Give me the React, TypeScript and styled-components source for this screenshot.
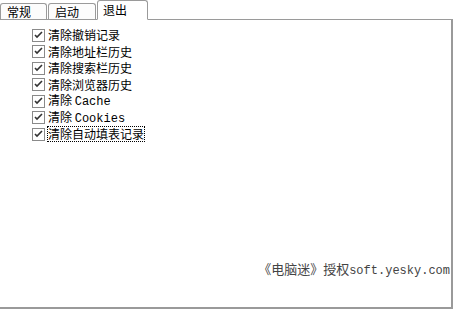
import styled, { createGlobalStyle } from "styled-components";

const GlobalStyle = createGlobalStyle`
  html, body {
    margin: 0;
    padding: 0;
    background: #ffffff;
  }
  body {
    font-family: "Noto Sans CJK SC", "DejaVu Sans", sans-serif;
    font-size: 12px;
    color: #000000;
  }
`;

const Window = styled.div`
  width: 474px;
  height: 310px;
  display: flex;
  flex-direction: column;
  background: #ffffff;
`;

const TabStrip = styled.div`
  display: flex;
  align-items: flex-end;
  height: 19px;
  position: relative;
  z-index: 1;
`;

const Tab = styled.div<{ $active?: boolean; $width: number }>`
  box-sizing: border-box;
  width: ${(p) => p.$width}px;
  height: ${(p) => (p.$active ? 20 : 16)}px;
  margin-bottom: ${(p) => (p.$active ? -1 : 0)}px;
  margin-right: 1px;
  border: 1px solid #9a9a9a;
  border-bottom: ${(p) => (p.$active ? "1px solid #ffffff" : "none")};
  border-radius: 3px 3px 0 0;
  background: ${(p) => (p.$active ? "#ffffff" : "#fcfcfc")};
  display: flex;
  align-items: center;
  padding-left: ${(p) => (p.$active ? 5 : 6)}px;
  padding-top: ${(p) => (p.$active ? 0 : 1)}px;
  font-size: 12px;
  line-height: 14px;
  white-space: nowrap;
`;

const Panel = styled.div`
  box-sizing: border-box;
  width: 453px;
  height: 290px;
  border-top: 1px solid #9a9a9a;
  border-right: 2px solid #9a9a9a;
  border-bottom: 2px solid #9a9a9a;
  display: flex;
  flex-direction: column;
  padding: 7px 0 27px 32px;
`;

const List = styled.div`
  display: flex;
  flex-direction: column;
  gap: 0.5px;
`;

const Row = styled.label`
  display: flex;
  align-items: center;
  height: 16px;
  gap: 2px;
`;

const Box = styled.span`
  box-sizing: border-box;
  width: 13px;
  height: 13px;
  border: 1px solid #8a8a8a;
  background: #ffffff;
  display: flex;
  align-items: center;
  justify-content: center;
  flex-shrink: 0;
`;

const Label = styled.span<{ $focused?: boolean }>`
  font-size: 12px;
  line-height: 16px;
  padding: 0 1px;
  outline: ${(p) => (p.$focused ? "1px dotted #000" : "none")};
  outline-offset: -1px;
  white-space: nowrap;
`;

const Mono = styled.span`
  font-family: "Liberation Mono", "DejaVu Sans Mono", monospace;
  font-size: 12px;
`;

const Watermark = styled.div`
  margin-top: auto;
  align-self: flex-end;
  margin-right: 1px;
  font-size: 13px;
  line-height: 18px;
  color: #444444;
  white-space: nowrap;
`;

const Check = () => (
  <svg width="9" height="9" viewBox="0 0 9 9">
    <path d="M1 4 L3 6 L8 1" fill="none" stroke="#333" strokeWidth="1.6" />
  </svg>
);

const items: { text: React.ReactNode; focused?: boolean }[] = [
  { text: "清除撤销记录" },
  { text: "清除地址栏历史" },
  { text: "清除搜索栏历史" },
  { text: "清除浏览器历史" },
  { text: <>清除 <Mono>Cache</Mono></> },
  { text: <>清除 <Mono>Cookies</Mono></> },
  { text: "清除自动填表记录", focused: true },
];

export default function App() {
  return (
    <>
      <GlobalStyle />
      <Window>
        <TabStrip>
          <Tab $width={47}>常规</Tab>
          <Tab $width={48}>启动</Tab>
          <Tab $width={51} $active>
            退出
          </Tab>
        </TabStrip>
        <Panel>
          <List>
            {items.map((item, i) => (
              <Row key={i}>
                <Box>
                  <Check />
                </Box>
                <Label $focused={item.focused}>{item.text}</Label>
              </Row>
            ))}
          </List>
          <Watermark>
            《电脑迷》授权<Mono>soft.yesky.com</Mono>
          </Watermark>
        </Panel>
      </Window>
    </>
  );
}
